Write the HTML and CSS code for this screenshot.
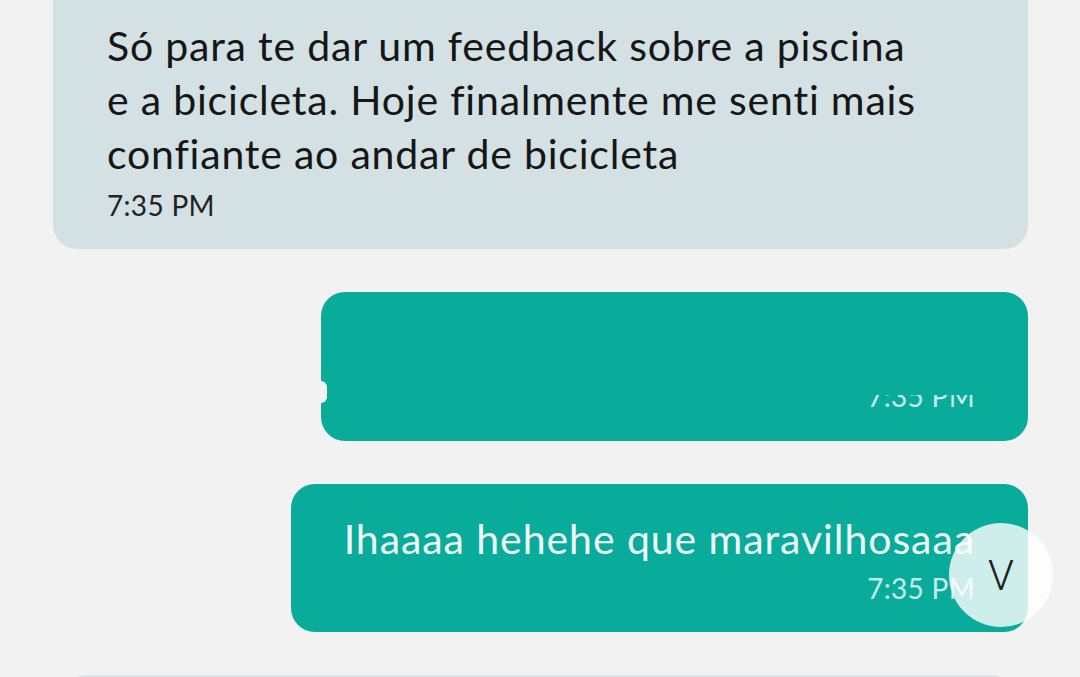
FILE: index.html
```html
<!DOCTYPE html>
<html>
<head>
<meta charset="utf-8">
<title>Chat</title>
<link rel="stylesheet" href="styles.css">
</head>
<body>
	<div class="chat">
		<div class="msg received">
			<div class="text">Só para te dar um feedback sobre a piscina<br>e a bicicleta. Hoje finalmente me senti mais<br>confiante ao andar de bicicleta</div>
			<div class="time">7:35 PM</div>
		</div>
		<div class="msg sent sent-wide">
			<span class="blip"></span>
			<div class="text empty"></div>
			<div class="time"><span class="clipped">7:35 PM</span></div>
		</div>
		<div class="msg sent">
			<div class="text">Ihaaaa hehehe que maravilhosaaa</div>
			<div class="time">7:35 PM</div>
			<div class="avatar">V</div>
		</div>
		<div class="msg received next"></div>
	</div>
</body>
</html>
```

FILE: styles.css
```css
html, body {
	margin: 0;
	padding: 0;
	background: #f2f2f2;
	overflow: hidden;
}

.chat {
	width: 1080px;
	display: flex;
	flex-direction: column;
	align-items: flex-end;
	gap: 43px;
	margin-top: -40px;
	font-family: "Lato", "Noto Sans", sans-serif;
}

.msg {
	position: relative;
	box-sizing: border-box;
	border-radius: 24px;
	margin-right: 52px;
}

.received {
	align-self: flex-start;
	margin-left: 53px;
	width: 975px;
	background: #d3e0e4;
	color: #161616;
	padding: 59px 54px 27px 54px;
}

.received .text {
	font-size: 41px;
	line-height: 54px;
	letter-spacing: 0.8px;
}

.received .time {
	font-size: 28px;
	line-height: 34px;
	letter-spacing: 0.3px;
	color: #222;
	margin-top: 7px;
}

.sent {
	background: #09ab9b;
	color: #eef9f7;
	padding: 30px 53px 0 53px;
	height: 148px;
}

.sent-wide {
	width: 707px;
	height: 149px;
}

.sent .text {
	font-size: 41px;
	line-height: 50px;
	letter-spacing: 0.93px;
	height: 50px;
}

.sent .time {
	text-align: right;
	font-size: 28px;
	line-height: 34px;
	letter-spacing: 0.3px;
	color: #c9ece8;
	margin-top: 7px;
}

.clipped {
	display: inline-block;
	clip-path: inset(16px 0 0 0);
	margin-top: -2px;
}

.blip {
	position: absolute;
	left: -1px;
	top: 89px;
	width: 7px;
	height: 22px;
	border-radius: 0 6px 6px 0;
	background: #f3f3f3;
}

.avatar {
	position: absolute;
	right: -25px;
	top: 39px;
	width: 104px;
	height: 104px;
	border-radius: 50%;
	background: rgba(255, 255, 255, 0.8);
	color: #222;
	font-family: "Roboto", sans-serif;
	font-weight: 300;
	font-size: 42px;
	display: flex;
	align-items: center;
	justify-content: center;
}

.next {
	height: 80px;
	width: 952px;
	margin-left: 63px;
	background: #dbe5e9;
}
```
